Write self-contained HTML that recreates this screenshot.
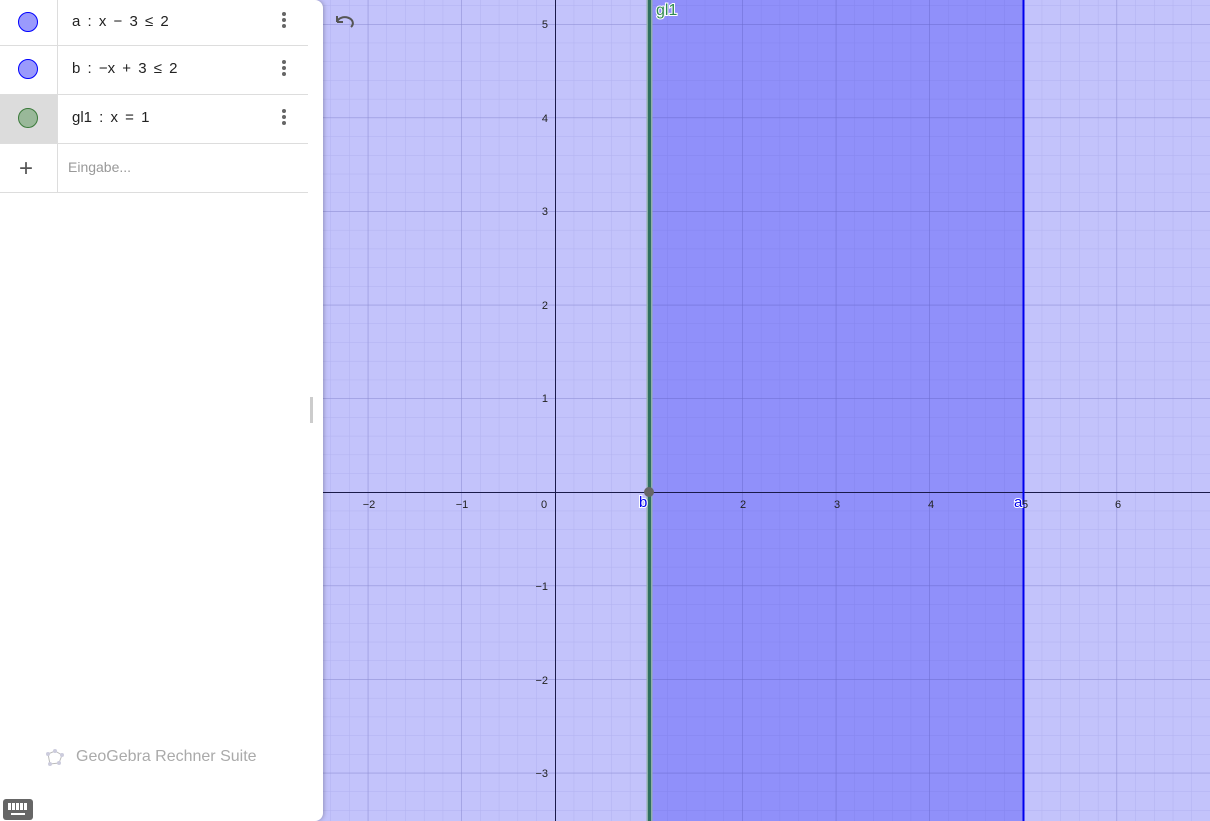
<!DOCTYPE html>
<html><head><meta charset="utf-8"><style>
body{margin:0;width:1210px;height:821px;overflow:hidden;font-family:"Liberation Sans",sans-serif;position:relative;background:#c3c3fb}
svg{position:absolute;left:0;top:0}
#panel{position:absolute;left:0;top:0;width:323px;height:821px;background:#fff;border-radius:0 8px 8px 0;box-shadow:1px 0 4px rgba(0,0,0,.25)}
.row{position:absolute;left:0;width:308px;height:48px;border-bottom:1px solid #ddd}
.mark{position:absolute;left:0;top:0;width:57px;height:48px;border-right:1px solid #ddd}
.dot{position:absolute;left:18px;top:13px;width:18px;height:18px;border-radius:50%}
.txt{position:absolute;left:72px;top:14px;font-size:15px;color:#222;word-spacing:3px}
.menu{position:absolute;left:282px;top:14px;width:4px}
.menu i{display:block;width:4px;height:4px;border-radius:2px;background:#666;margin-bottom:2px}
</style></head><body>
<svg width="1210" height="821">
<defs>
<pattern id="mn" width="18.72" height="18.72" patternUnits="userSpaceOnUse" patternTransform="translate(555,492)">
<path d="M0 0V18.72M0 0H18.72" stroke="rgba(60,60,160,0.13)" stroke-width="1" fill="none"/></pattern>
<pattern id="mj" width="93.6" height="93.6" patternUnits="userSpaceOnUse" patternTransform="translate(555,492)">
<path d="M0 0V93.6M0 0H93.6" stroke="rgba(50,50,140,0.32)" stroke-width="1" fill="none"/></pattern>
</defs>
<rect x="0" y="0" width="1210" height="821" fill="#c3c3fb"/>
<rect x="649" y="0" width="374" height="821" fill="#9090fa"/>
<rect x="0" y="0" width="1210" height="821" fill="url(#mn)"/>
<rect x="0" y="0" width="1210" height="821" fill="url(#mj)"/>
<line x1="0" y1="492.5" x2="1210" y2="492.5" stroke="#1a1a4a" stroke-width="1"/>
<line x1="555.5" y1="0" x2="555.5" y2="821" stroke="#1a1a4a" stroke-width="1"/>
<line x1="649.5" y1="0" x2="649.5" y2="821" stroke="#8fb0a8" stroke-width="6"/>
<line x1="649.5" y1="0" x2="649.5" y2="821" stroke="#2f6f5e" stroke-width="3"/>
<line x1="1023.5" y1="0" x2="1023.5" y2="821" stroke="#0000ee" stroke-width="2"/>
<circle cx="649" cy="492" r="5" fill="#666"/>
<g font-size="11" fill="#222" font-family="Liberation Sans">
<text x="369" y="508" text-anchor="middle">−2</text>
<text x="462" y="508" text-anchor="middle">−1</text>
<text x="544" y="508" text-anchor="middle">0</text>
<text x="743" y="508" text-anchor="middle">2</text>
<text x="837" y="508" text-anchor="middle">3</text>
<text x="931" y="508" text-anchor="middle">4</text>
<text x="1118" y="508" text-anchor="middle">6</text>
<text x="1025" y="508" text-anchor="middle">5</text>
<g text-anchor="end">
<text x="548" y="28">5</text><text x="548" y="122">4</text><text x="548" y="215">3</text>
<text x="548" y="309">2</text><text x="548" y="402">1</text><text x="548" y="590">−1</text>
<text x="548" y="684">−2</text><text x="548" y="777">−3</text></g>
</g>
<text x="639" y="507" font-size="15" fill="#0000ee" stroke="#fff" stroke-width="2" paint-order="stroke">b</text>
<text x="1014" y="507" font-size="15" fill="#0000ee" stroke="#fff" stroke-width="2" paint-order="stroke">a</text>
<text x="656" y="15" font-size="16" fill="#2f8a50" stroke="#fff" stroke-width="2" paint-order="stroke">gl1</text>
<path d="M337 22 a8 6 0 1 1 14 5 M337 22 l0 -6 M337 22 l6 0" stroke="#555" stroke-width="2" fill="none"/>
</svg>
<div id="panel">
<div class="row" style="top:-3px"><div class="mark"><div class="dot" style="background:#9a9afc;border:1px solid #00f;top:15px"></div></div><div class="txt" style="top:16px">a : x − 3 ≤ 2</div><div class="menu" style="top:15px"><i></i><i></i><i></i></div></div>
<div class="row" style="top:46px"><div class="mark"><div class="dot" style="background:#9a9afc;border:1px solid #00f"></div></div><div class="txt">b : −x + 3 ≤ 2</div><div class="menu"><i></i><i></i><i></i></div></div>
<div class="row" style="top:95px"><div class="mark" style="background:#dcdcdc"><div class="dot" style="background:#99b899;border:1px solid #3a7a3a"></div></div><div class="txt">gl1 : x = 1</div><div class="menu"><i></i><i></i><i></i></div></div>
<div class="row" style="top:144px"><div class="mark"><div style="position:absolute;left:19px;top:11px;font-size:24px;color:#555">+</div></div><div class="txt" style="left:68px;color:#999;font-size:14px;top:15px;word-spacing:0">Eingabe...</div></div>
<div style="position:absolute;left:310px;top:397px;width:3px;height:26px;background:#ccc"></div>
<svg style="left:43px;top:748px" width="22" height="20"><path d="M5 6 L12 3 L19 7 L16 15 L7 16 Z" stroke="#bbb" fill="none"/><g fill="#ccd"><circle cx="5" cy="6" r="2"/><circle cx="12" cy="3" r="2"/><circle cx="19" cy="7" r="2"/><circle cx="16" cy="15" r="2"/><circle cx="7" cy="16" r="2"/></g></svg>
<div style="position:absolute;left:76px;top:748px;font-size:16px;color:#aaa">GeoGebra Rechner Suite</div>
<div style="position:absolute;left:3px;top:799px;width:30px;height:21px;background:#666;border-radius:3px"><div style="position:absolute;left:5px;top:4px;width:20px;height:7px;background:repeating-linear-gradient(90deg,#fff 0 3px,transparent 3px 4px)"></div><div style="position:absolute;left:8px;top:14px;width:14px;height:2px;background:#fff"></div></div>
</div>
</body></html>
